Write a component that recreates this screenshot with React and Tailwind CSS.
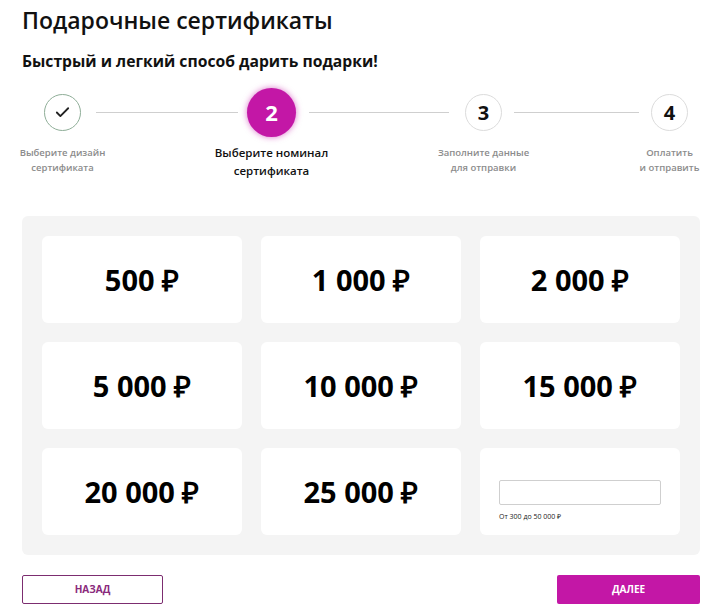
import { Check } from 'lucide-react';

const amounts = ['500 ₽', '1 000 ₽', '2 000 ₽', '5 000 ₽', '10 000 ₽', '15 000 ₽', '20 000 ₽', '25 000 ₽'];

function Step({ circle, label, active }) {
  return (
    <div className="flex flex-col items-center w-[49px] shrink-0">
      <div className="h-[49px] w-[49px] flex items-center justify-center">{circle}</div>
      <div
        className={
          active
            ? 'w-[140px] mt-[7px] text-center text-[11.5px] leading-[18px] font-semibold text-[#111]'
            : 'w-[140px] mt-[8px] text-center text-[9.5px] leading-[15px] font-semibold text-[#8c8c8c]'
        }
      >
        {label[0]}
        <br />
        {label[1]}
      </div>
    </div>
  );
}

export default function App() {
  const numCircle = (n) => (
    <div className="w-[37px] h-[37px] rounded-full border border-[#dcdcdc] bg-white flex items-center justify-center text-[20px] font-bold text-[#111]">
      {n}
    </div>
  );

  return (
    <div className="w-[706px] h-[615px] bg-white pl-[22px] pr-[6px] pt-[5px] font-['Open_Sans',sans-serif] text-[#111]">
      {/* Header */}
      <h1 className="text-[23px] leading-[31px] font-semibold">Подарочные сертификаты</h1>
      <h2 className="mt-[14px] text-[15.7px] leading-[22px] font-bold">Быстрый и легкий способ дарить подарки!</h2>

      {/* Steps */}
      <div className="mt-[16px] flex items-start pl-[16px] h-[95px]">
        <Step
          circle={
            <div className="w-[37px] h-[37px] rounded-full border border-[#8fae98] bg-white flex items-center justify-center">
              <Check size={17} strokeWidth={2.6} className="text-[#222]" />
            </div>
          }
          label={['Выберите дизайн', 'сертификата']}
        />
        <div className="w-[142px] h-px bg-[#cfcfcf] mt-[24px] ml-[9px] mr-[9px]" />
        <Step
          active
          circle={
            <div className="w-[49px] h-[49px] rounded-full bg-[#c317a6] shadow-[0_0_6px_rgba(195,23,166,0.6)] flex items-center justify-center text-[22px] font-bold text-white">
              2
            </div>
          }
          label={['Выберите номинал', 'сертификата']}
        />
        <div className="w-[140px] h-px bg-[#cfcfcf] mt-[24px] ml-[13px] mr-[10px]" />
        <Step circle={numCircle(3)} label={['Заполните данные', 'для отправки']} />
        <div className="w-[125px] h-px bg-[#cfcfcf] mt-[24px] ml-[6px] mr-[6px]" />
        <Step circle={numCircle(4)} label={['Оплатить', 'и отправить']} />
      </div>

      {/* Amounts */}
      <div className="mt-[33px] bg-[#f4f4f4] rounded-[6px] p-[20px] grid grid-cols-3 gap-x-[19px] gap-y-[19px]">
        {amounts.map((a) => (
          <div key={a} className="h-[87px] bg-white rounded-[6px] flex items-center justify-center text-[29px] font-bold text-black">
            {a}
          </div>
        ))}
        <div className="h-[87px] bg-white rounded-[6px] px-[19px] pt-[31px]">
          <input className="w-full h-[25px] border border-[#cfcfcf] rounded-[2px] outline-none px-2 text-[12px]" />
          <div className="mt-[7px] text-[7px] leading-[9px] text-[#222]">От 300 до 50 000 ₽</div>
        </div>
      </div>

      {/* Buttons */}
      <div className="mt-[20px] flex justify-between">
        <button className="w-[141px] h-[29px] border border-[#7c2d70] rounded-[2px] bg-white text-[10px] font-bold text-[#8a2a7c]">
          НАЗАД
        </button>
        <button className="w-[143px] h-[29px] rounded-[2px] bg-[#c317a6] text-[10px] font-bold text-white">
          ДАЛЕЕ
        </button>
      </div>
    </div>
  );
}
